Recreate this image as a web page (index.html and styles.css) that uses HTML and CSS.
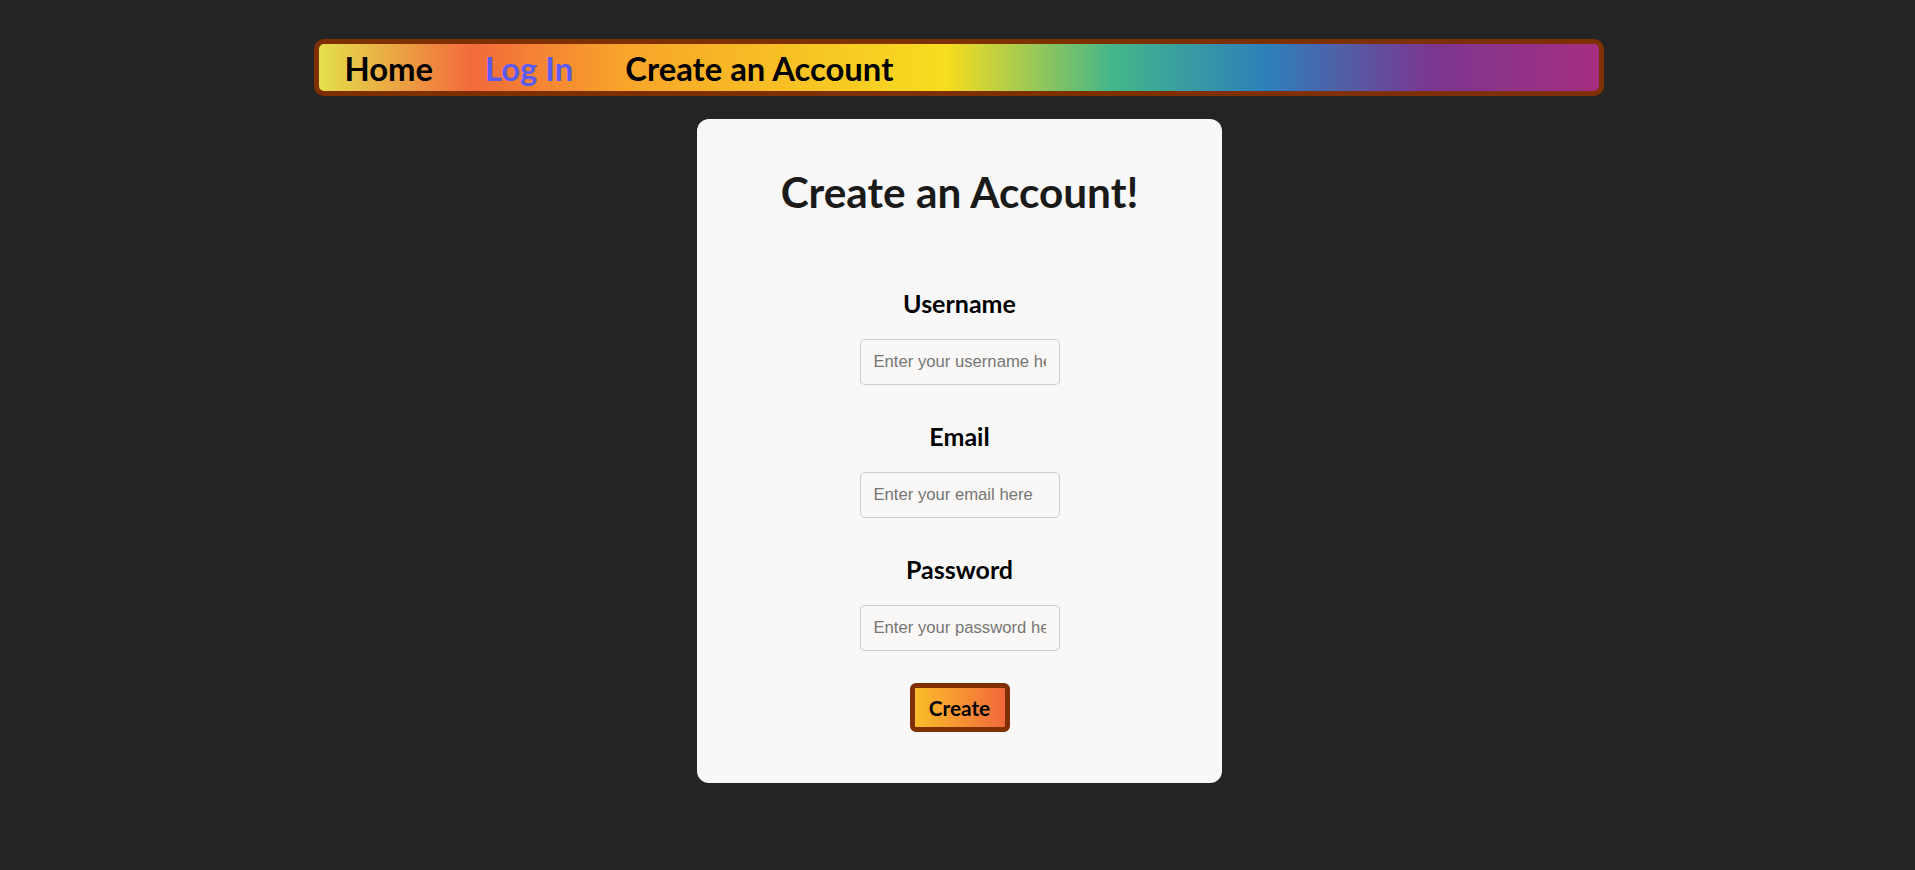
FILE: index.html
```html
<!DOCTYPE html>
<html lang="en">
<head>
<meta charset="utf-8">
<title>Create an Account</title>
<link rel="stylesheet" href="styles.css">
</head>
<body>
  <nav class="navbar">
    <a class="nav-link" href="#">Home</a>
    <a class="nav-link nav-link--active" href="#">Log In</a>
    <span class="nav-title">Create an Account</span>
  </nav>
  <main class="card">
    <h1 class="card-title">Create an Account!</h1>
    <form class="form">
      <label class="field-label" for="username">Username</label>
      <input class="field-input" id="username" type="text" placeholder="Enter your username here">
      <label class="field-label" for="email">Email</label>
      <input class="field-input" id="email" type="email" placeholder="Enter your email here">
      <label class="field-label" for="password">Password</label>
      <input class="field-input" id="password" type="password" placeholder="Enter your password here">
      <button class="submit-btn" type="button">Create</button>
    </form>
  </main>
</body>
</html>
```
FILE: styles.css
```css
html, body {
  margin: 0;
  padding: 0;
}

body {
  background: #242424;
  font-family: "Segoe UI", Lato, "Open Sans", sans-serif;
  min-height: 870px;
  display: flex;
  flex-direction: column;
  align-items: center;
}

.navbar {
  box-sizing: border-box;
  width: 1290px;
  height: 57px;
  margin-top: 39px;
  margin-left: 2px;
  border: 5px solid #7f3000;
  border-radius: 10px;
  background: linear-gradient(to right,
    #e4e04c 0%,
    #f26a3b 12%,
    #f8a52a 24%,
    #f7dc1f 49%,
    #44b68a 62%,
    #2d80ba 74%,
    #7b3690 87%,
    #a62e80 100%);
  display: flex;
  align-items: center;
  gap: 52px;
  padding: 3px 0 0 26px;
}

.nav-link,
.nav-title {
  font-size: 32.8px;
  font-weight: 700;
  color: #000;
  text-decoration: none;
  line-height: 38px;
}

.nav-link--active {
  color: #5b5cf4;
}

.card {
  box-sizing: border-box;
  width: 525px;
  height: 664px;
  margin-top: 23px;
  margin-left: 4px;
  background: #f8f8f8;
  border-radius: 12px;
  padding-top: 49px;
  display: flex;
  flex-direction: column;
  align-items: center;
}

.card-title {
  margin: 0;
  font-size: 42.3px;
  line-height: 48px;
  font-weight: 700;
  color: #1a1a1a;
}

.form {
  margin-top: 73px;
  display: flex;
  flex-direction: column;
  align-items: center;
}

.field-label {
  font-size: 25px;
  line-height: 28px;
  font-weight: 700;
  color: #000;
  margin-bottom: 22px;
}

.field-input {
  box-sizing: border-box;
  width: 200px;
  height: 46px;
  margin: 0 0 37px 0;
  padding: 0 13px;
  border: 1px solid #cccccc;
  border-radius: 5px;
  background: #faf8f6;
  font-family: "Liberation Sans", Arial, sans-serif;
  font-size: 16.67px;
  color: #222;
  outline: none;
}

.field-input::placeholder {
  color: #757575;
}

.field-input:last-of-type {
  margin-bottom: 32px;
}

.submit-btn {
  box-sizing: border-box;
  width: 100px;
  height: 49px;
  border: 5px solid #7f3000;
  border-radius: 6px;
  background: linear-gradient(to right, #fbbd2a, #f2693c);
  font-family: "Segoe UI", Lato, "Open Sans", sans-serif;
  font-size: 20.8px;
  font-weight: 700;
  color: #000;
  cursor: pointer;
  padding: 0;
}
```
